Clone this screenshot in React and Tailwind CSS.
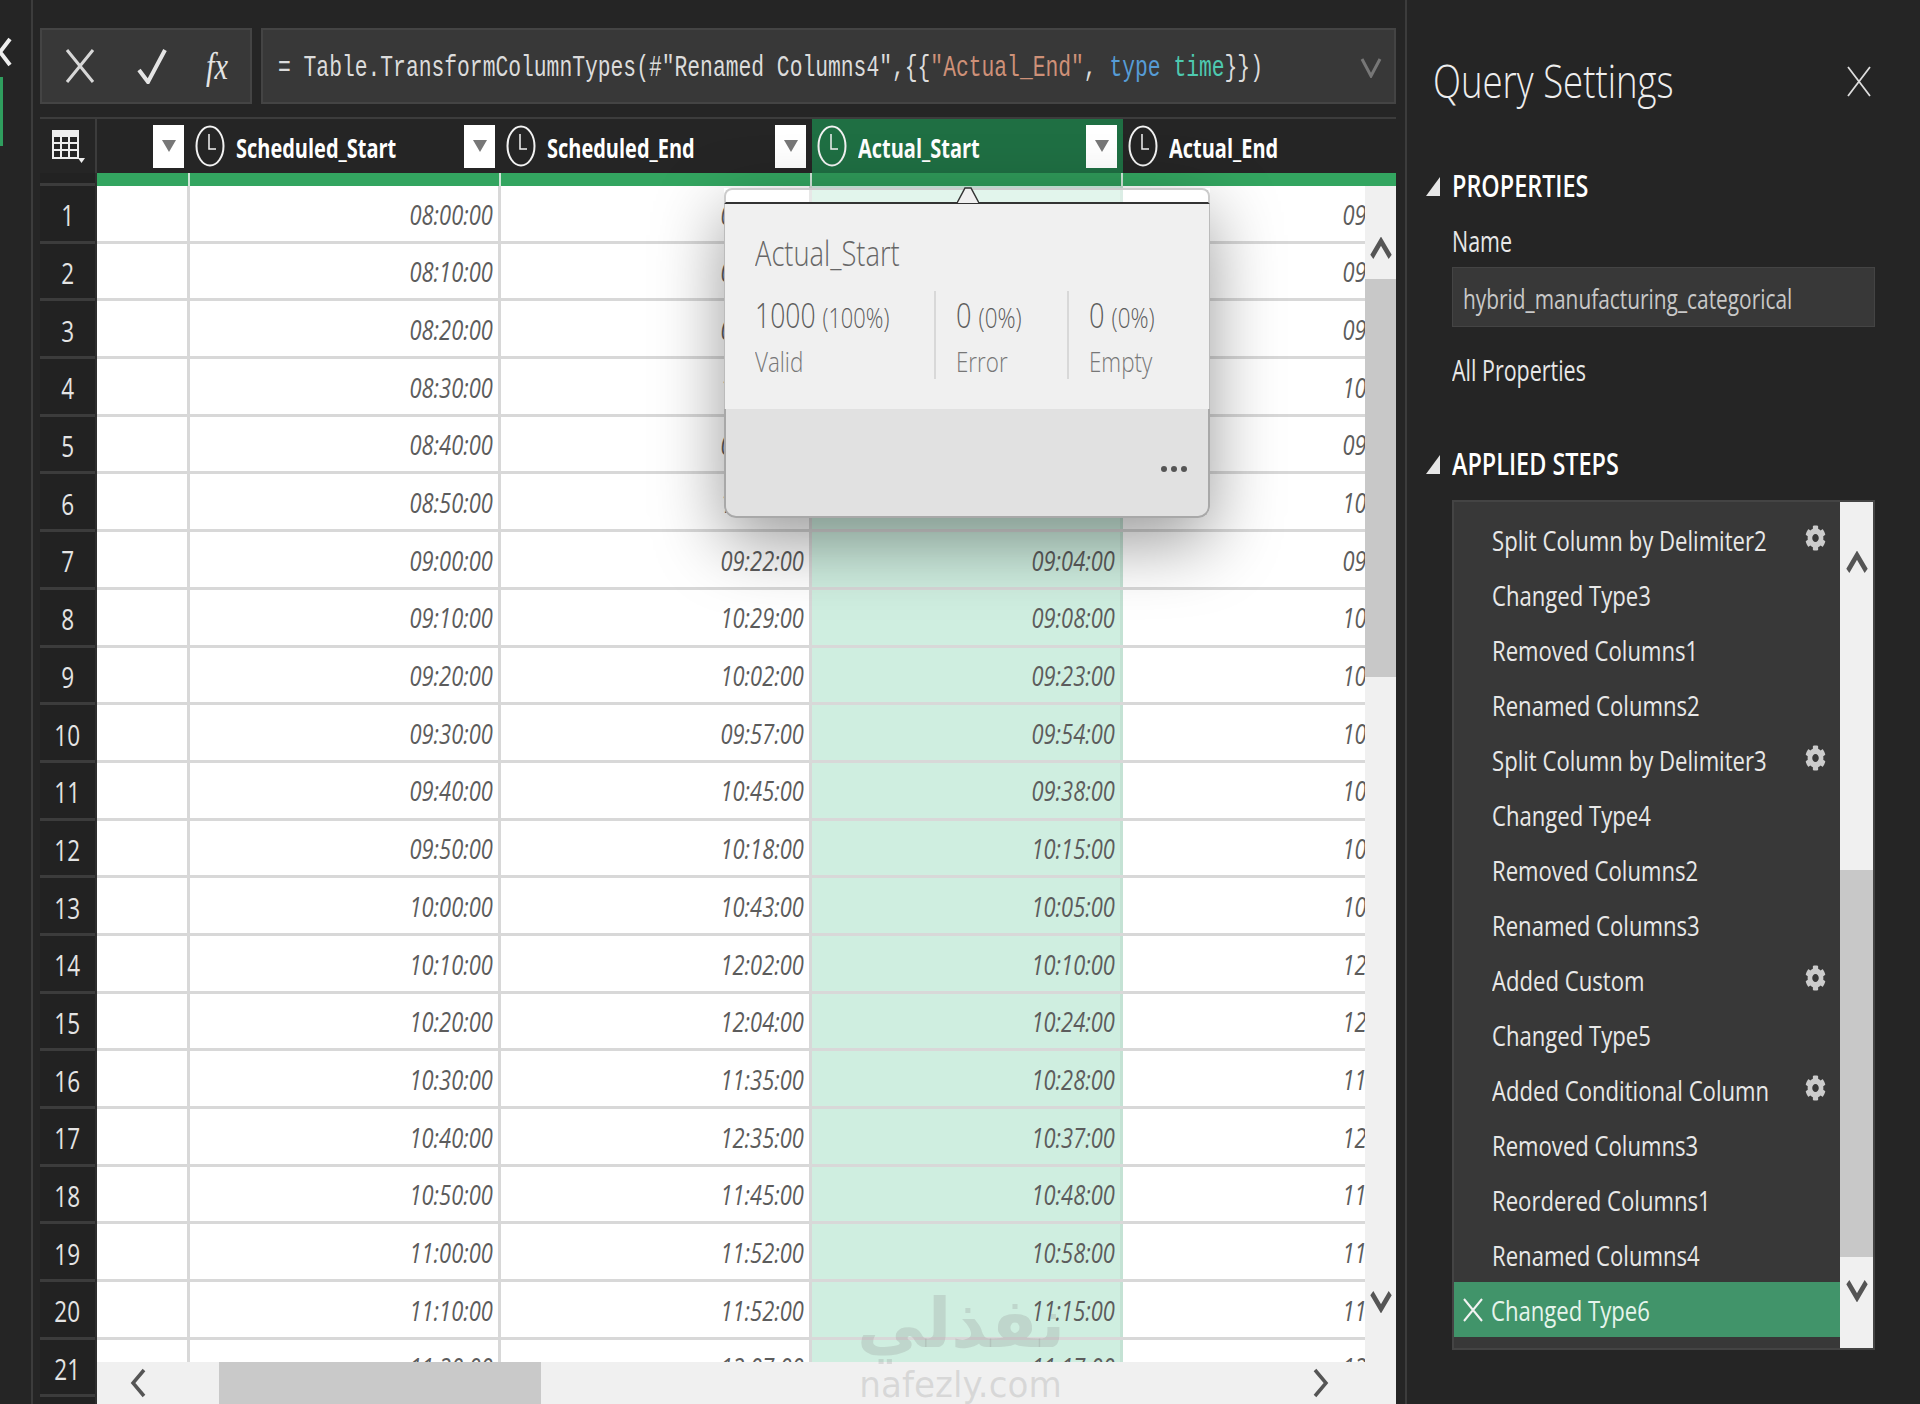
import React from "react";
import { FaCog } from "react-icons/fa";

const schedStart = ["08:00:00","08:10:00","08:20:00","08:30:00","08:40:00","08:50:00","09:00:00","09:10:00","09:20:00","09:30:00","09:40:00","09:50:00","10:00:00","10:10:00","10:20:00","10:30:00","10:40:00","10:50:00","11:00:00","11:10:00","11:20:00"];
const schedEnd = ["09:08:00","09:18:00","09:28:00","10:38:00","09:48:00","10:58:00","09:22:00","10:29:00","10:02:00","09:57:00","10:45:00","10:18:00","10:43:00","12:02:00","12:04:00","11:35:00","12:35:00","11:45:00","11:52:00","11:52:00","12:07:00"];
const actualStart = ["08:02:00","08:12:00","08:21:00","08:33:00","08:44:00","08:52:00","09:04:00","09:08:00","09:23:00","09:54:00","09:38:00","10:15:00","10:05:00","10:10:00","10:24:00","10:28:00","10:37:00","10:48:00","10:58:00","11:15:00","11:17:00"];
const actualEnd = ["09:10:00","09:20:00","09:30:00","10:40:00","09:50:00","10:05:00","09:40:00","10:35:00","10:12:00","10:03:00","10:55:00","10:28:00","10:50:00","12:10:00","12:14:00","11:42:00","12:40:00","11:50:00","11:59:00","11:58:00","12:10:00"];

const steps = [
  ["Split Column by Delimiter2", true],
  ["Changed Type3", false],
  ["Removed Columns1", false],
  ["Renamed Columns2", false],
  ["Split Column by Delimiter3", true],
  ["Changed Type4", false],
  ["Removed Columns2", false],
  ["Renamed Columns3", false],
  ["Added Custom", true],
  ["Changed Type5", false],
  ["Added Conditional Column", true],
  ["Removed Columns3", false],
  ["Reordered Columns1", false],
  ["Renamed Columns4", false],
];

const ClockIcon = () => (
  <svg viewBox="0 0 30 42" preserveAspectRatio="none" className="w-[30px] h-[42px] shrink-0" fill="none" stroke="#f2f2f2" strokeWidth="2">
    <ellipse cx="15" cy="21" rx="13.5" ry="19.5" />
    <path d="M14 9v15h7" strokeWidth="1.5" />
  </svg>
);

const FilterButton = () => (
  <div className="w-[31px] h-[43px] bg-white flex items-center justify-center shrink-0">
    <svg viewBox="0 0 14 12" className="w-[14px] h-[12px]"><path d="M0 0h14L7 12z" fill="#777" /></svg>
  </div>
);

const HeaderCell = ({ title, active, width, noButton }) => (
  <div className={`flex items-center h-full shrink-0 pl-[5px] pr-[6px] ${width} ${active ? "bg-[#1f6f43]" : ""}`}>
    <ClockIcon />
    <span className="ml-[11px] pt-[4px] inline-block origin-left scale-x-[0.74] text-[27px] font-bold text-white whitespace-nowrap flex-1">{title}</span>
    {!noButton && <FilterButton />}
  </div>
);

const Cell = ({ value, width, tint }) => (
  <div className={`${width} shrink-0 h-full flex items-center justify-end pr-[5px] pt-[3px] border-r-[3px] ${tint ? "bg-[#cfeee0] border-[#c4e2d4]" : "border-[#d8d8d8]"}`}>
    <span className="inline-block origin-right scale-x-[0.81] italic text-[27px] text-[#5c5c5c] whitespace-nowrap">{value}</span>
  </div>
);

const Arrow = ({ dir, className }) => {
  const d = {
    up: "M2 14 L12 3 L22 14",
    down: "M2 3 L12 14 L22 3",
  }[dir];
  return (
    <svg viewBox="0 0 24 17" className={`w-[22px] h-[24px] ${className}`} preserveAspectRatio="none" fill="none" stroke="#555" strokeWidth="4.5">
      <path d={d} />
    </svg>
  );
};

const SideArrow = ({ right }) => (
  <svg viewBox="0 0 18 30" preserveAspectRatio="none" className="w-[18px] h-[30px]" fill="none" stroke="#555" strokeWidth="3.5">
    <path d={right ? "M3 2 L14 15 L3 28" : "M15 2 L4 15 L15 28"} />
  </svg>
);

const Triangle = () => (
  <svg viewBox="0 0 14 19" preserveAspectRatio="none" className="w-[14px] h-[19px] shrink-0"><path d="M14 0v19H0z" fill="#e6e6e6" /></svg>
);

const Popup = () => (
  <div className="absolute left-[724px] top-[188px] w-[486px] h-[330px] flex flex-col rounded-b-[12px] shadow-[0_24px_70px_rgba(0,0,0,0.4)] text-[#5c5c5c]">
    <div className="relative h-[16px] rounded-t-[8px] bg-white/40 border-x-2 border-t-2 border-b-2 border-x-[#ccc] border-t-[#ccc] border-b-[#333]">
      <svg viewBox="0 0 22 16" className="absolute left-[231px] top-[-4px] w-[22px] h-[18px]">
        <path d="M0 16 L8 1 L14 1 L22 16" fill="#f0f0f0" stroke="#333" strokeWidth="1.5" />
      </svg>
    </div>
    <div className="h-[205px] bg-[#f0f0f0] pl-[30px] pt-[27px] border-x border-[#bbb]">
      <div className="origin-left scale-x-[0.78] text-[35px] font-light leading-[44px] whitespace-nowrap text-[#666]">Actual_Start</div>
      <div className="flex mt-[16px] h-[88px]">
        <div className="w-[181px] border-r-2 border-[#d8d8d8] pt-[2px]">
          <div className="origin-left scale-x-[0.78] text-[34px] leading-[44px] font-light whitespace-nowrap">1000 <span className="text-[28px]">(100%)</span></div>
          <div className="mt-[2px] origin-left scale-x-[0.8] text-[28px] font-light leading-[40px] text-[#777]">Valid</div>
        </div>
        <div className="w-[133px] pl-[20px] border-r-2 border-[#d8d8d8] pt-[2px]">
          <div className="origin-left scale-x-[0.8] text-[34px] leading-[44px] font-light whitespace-nowrap">0 <span className="text-[28px]">(0%)</span></div>
          <div className="mt-[2px] origin-left scale-x-[0.8] text-[28px] font-light leading-[40px] text-[#777]">Error</div>
        </div>
        <div className="pl-[20px] pt-[2px]">
          <div className="origin-left scale-x-[0.8] text-[34px] leading-[44px] font-light whitespace-nowrap">0 <span className="text-[28px]">(0%)</span></div>
          <div className="mt-[2px] origin-left scale-x-[0.8] text-[28px] font-light leading-[40px] text-[#777]">Empty</div>
        </div>
      </div>
    </div>
    <div className="flex-1 bg-[#e1e1e1] rounded-b-[12px] border-2 border-t-0 border-[#a8a8a8] flex justify-end items-end pr-[21px] pb-[44px] gap-[4px]">
      <span className="w-[6px] h-[6px] rounded-full bg-[#555]" />
      <span className="w-[6px] h-[6px] rounded-full bg-[#555]" />
      <span className="w-[6px] h-[6px] rounded-full bg-[#555]" />
    </div>
  </div>
);

const App = () => {
  return (
    <div className="relative w-[1920px] h-[1404px] overflow-hidden bg-[#252525] flex font-['Open_Sans',sans-serif]">
      {/* left collapsed rail */}
      <div className="relative w-[33px] shrink-0 border-r-2 border-[#3c3c3c] flex flex-col">
        <svg viewBox="0 0 14 30" className="mt-[37px] ml-[-2px] w-[14px] h-[30px]" fill="none" stroke="#eee" strokeWidth="4"><path d="M12 2 L2 15 L12 28" /></svg>
        <div className="mt-[10px] w-[3px] h-[69px] bg-[#2f9e5e]" />
      </div>

      {/* formula bar + grid */}
      <div className="w-[1363px] shrink-0 pl-[7px] pt-[28px] flex flex-col">
        <div className="flex gap-[9px] h-[76px]">
          <div className="w-[212px] shrink-0 bg-[#383838] border-2 border-[#444] flex items-center">
            <svg viewBox="0 0 30 36" className="ml-[23px] w-[30px] h-[36px]" fill="none" stroke="#d8d8d8" strokeWidth="3"><path d="M2 2 L28 34 M28 2 L2 34" /></svg>
            <svg viewBox="0 0 30 36" className="ml-[42px] w-[30px] h-[36px]" fill="none" stroke="#e4e4e4" strokeWidth="4"><path d="M2 22 L11 34 L28 2" /></svg>
            <span className="ml-[39px] font-['Liberation_Serif',serif] italic text-[38px] text-[#e4e4e4] inline-block origin-left scale-x-[0.8]">fx</span>
          </div>
          <div className="flex-1 min-w-0 overflow-hidden bg-[#383838] border-2 border-[#444] flex items-center pl-[15px] pt-[5px] relative">
            <span className="inline-block origin-left scale-x-[0.735] font-['Liberation_Mono',monospace] text-[29px] text-[#dcdcdc] whitespace-pre">
              {'= Table.TransformColumnTypes(#"Renamed Columns4",{{'}
              <span className="text-[#ce9178]">"Actual_End"</span>
              {", "}
              <span className="text-[#569cd6]">type</span>{" "}
              <span className="text-[#4ec9b0]">time</span>
              {"}})"}
            </span>
            <svg viewBox="0 0 22 22" className="absolute right-[12px] top-[26px] w-[22px] h-[22px]" fill="none" stroke="#777" strokeWidth="3"><path d="M2 3 L11 20 L20 3" /></svg>
          </div>
        </div>

        <div className="mt-[13px] flex-1 min-h-0 flex flex-col overflow-hidden">
          {/* column headers */}
          <div className="h-[56px] flex items-center border-t-2 border-[#3c3c3c] shrink-0 overflow-hidden">
            <div className="w-[57px] h-full shrink-0 border-r-2 border-[#3c3c3c] flex items-center pl-[11px]">
              <svg viewBox="0 0 34 34" className="w-[34px] h-[34px]" fill="#eee">
                <path d="M1 1h27v29H1z M3 8v5h6V8z M11 8v5h6V8z M19 8v5h7V8z M3 15v5h6v-5z M11 15v5h6v-5z M19 15v5h7v-5z M3 22v6h6v-6z M11 22v6h6v-6z M19 22v6h7v-6z" fillRule="evenodd" />
                <path d="M27 29h7l-3.500 5z" />
              </svg>
            </div>
            <div className="w-[93px] h-full shrink-0 flex items-center justify-end pr-[6px]"><FilterButton /></div>
            <HeaderCell title="Scheduled_Start" width="w-[311px]" />
            <HeaderCell title="Scheduled_End" width="w-[311px]" />
            <HeaderCell title="Actual_Start" width="w-[311px]" active />
            <HeaderCell title="Actual_End" width="w-[273px]" noButton />
          </div>

          {/* body */}
          <div className="flex-1 min-h-0 flex">
            <div className="w-[57px] shrink-0 flex flex-col overflow-hidden border-r-2 border-[#2e2e2e] bg-[#222]">
              <div className="h-[13px] shrink-0 border-b-[3px] border-[#3c3c3c]" />
              {schedStart.map((_, i) => (
                <div key={i} className="h-[57.7px] shrink-0 border-b-[3px] border-[#3c3c3c] flex items-center justify-center pt-[3px]">
                  <span className="inline-block scale-x-[0.75] text-[30px] text-[#e4e4e4]">{i + 1}</span>
                </div>
              ))}
            </div>
            <div className="flex-1 min-w-0 flex flex-col">
              <div className="h-[13px] shrink-0 bg-[#33a560] flex">
                <div className="w-[93px] border-r-2 border-[#cfe6d8]" />
                <div className="w-[311px] border-r-2 border-[#cfe6d8]" />
                <div className="w-[311px] border-r-2 border-[#cfe6d8]" />
                <div className="w-[311px] border-r-2 border-[#cfe6d8] bg-[#2f9a59]" />
              </div>
              <div className="flex-1 min-h-0 flex">
                <div className="flex-1 min-w-0 bg-white overflow-hidden flex flex-col">
                  {schedStart.map((v, i) => (
                    <div key={i} className="h-[57.7px] shrink-0 flex w-[1337px] border-b-[3px] border-[#d8d8d8]">
                      <div className="w-[93px] shrink-0 border-r-[3px] border-[#d8d8d8]" />
                      <Cell value={v} width="w-[311px]" />
                      <Cell value={schedEnd[i]} width="w-[311px]" />
                      <Cell value={actualStart[i]} width="w-[311px]" tint />
                      <Cell value={actualEnd[i]} width="w-[311px]" />
                    </div>
                  ))}
                </div>
                <div className="w-[31px] shrink-0 bg-[#f0f0f0] flex flex-col items-center">
                  <Arrow dir="up" className="mt-[51px] shrink-0" />
                  <div className="mt-[18px] h-[398px] w-full bg-[#c8c8c8] shrink-0" />
                  <Arrow dir="down" className="mt-[612px] shrink-0" />
                </div>
              </div>
              <div className="h-[42px] shrink-0 bg-[#f0f0f0] flex items-center">
                <div className="ml-[32px]"><SideArrow /></div>
                <div className="ml-[72px] w-[322px] h-full bg-[#c9c9c9]" />
                <div className="ml-auto mr-[66px]"><SideArrow right /></div>
              </div>
            </div>
          </div>
        </div>
      </div>

      {/* right side panel */}
      <div className="ml-[9px] flex-1 border-l-2 border-[#3c3c3c] pl-[19px] flex flex-col">
        <div className="flex items-center h-[60px] mt-[50px] pl-[7px] relative">
          <span className="inline-block origin-left scale-x-[0.795] text-[46px] font-light text-[#eee] whitespace-nowrap leading-none">Query Settings</span>
          <svg viewBox="0 0 24 31" preserveAspectRatio="none" className="absolute left-[421px] top-[16px] w-[24px] h-[31px]" fill="none" stroke="#ddd" strokeWidth="1.8"><path d="M1 1 L23 30 M23 1 L1 30" /></svg>
        </div>
        <div className="mt-[60px] flex items-center gap-[12px]">
          <Triangle />
          <span className="inline-block origin-left scale-x-[0.78] text-[30px] font-semibold text-white whitespace-nowrap leading-[32px]">PROPERTIES</span>
        </div>
        <div className="pl-[26px]">
          <div className="mt-[23px] origin-left scale-x-[0.74] text-[29px] text-[#e8e8e8] leading-[32px]">Name</div>
          <div className="mt-[10px] w-[423px] h-[60px] bg-[#383838] border border-[#444] flex items-center pl-[10px] pt-[2px]">
            <span className="inline-block origin-left scale-x-[0.745] text-[28px] text-[#c8c8c8] whitespace-nowrap">hybrid_manufacturing_categorical</span>
          </div>
          <div className="mt-[27px] origin-left scale-x-[0.74] text-[29px] text-[#e8e8e8] leading-[32px] whitespace-nowrap">All Properties</div>
        </div>
        <div className="mt-[62px] flex items-center gap-[12px]">
          <Triangle />
          <span className="inline-block origin-left scale-x-[0.78] text-[30px] font-semibold text-white whitespace-nowrap leading-[32px]">APPLIED STEPS</span>
        </div>
        <div className="mt-[20px] ml-[26px] w-[423px] h-[850px] bg-[#383838] border-2 border-[#444] flex">
          <div className="flex-1 min-w-0 pt-[10px] flex flex-col">
            {steps.map(([name, gear]) => (
              <div key={name} className="h-[55px] shrink-0 flex items-center pl-[38px] relative">
                <span className="inline-block origin-left scale-x-[0.79] text-[28px] text-[#e8e8e8] whitespace-nowrap">{name}</span>
                {gear && <FaCog preserveAspectRatio="none" className="absolute left-[351px] top-[13px] w-[21px] h-[26px] text-[#ccc]" />}
              </div>
            ))}
            <div className="h-[55px] shrink-0 bg-[#41946a] flex items-center pl-[9px]">
              <svg viewBox="0 0 20 24" preserveAspectRatio="none" className="w-[20px] h-[24px] shrink-0" fill="none" stroke="#f2f2f2" strokeWidth="2"><path d="M1 1 L19 23 M19 1 L1 23" /></svg>
              <span className="ml-[8px] inline-block origin-left scale-x-[0.79] text-[28px] text-[#e6f4ec] whitespace-nowrap">Changed Type6</span>
            </div>
          </div>
          <div className="w-[33px] shrink-0 bg-[#f0f0f0] flex flex-col items-center">
            <Arrow dir="up" className="mt-[49px] shrink-0" />
            <div className="mt-[295px] h-[387px] w-full bg-[#c8c8c8] shrink-0" />
            <Arrow dir="down" className="mt-[21px] shrink-0" />
          </div>
        </div>
      </div>

      <Popup />

      {/* watermark */}
      <div className="absolute left-[841px] top-[1280px] w-[240px] flex flex-col items-center pointer-events-none">
        <span className="font-['DejaVu_Sans',sans-serif] font-bold text-[68px] leading-[88px] text-[#8f8f8f]/25">نفذلي</span>
        <span className="font-['DejaVu_Sans',sans-serif] text-[36px] leading-[40px] -mt-[3px] text-[#8f8f8f]/25 inline-block scale-x-[0.95]">nafezly.com</span>
      </div>
    </div>
  );
};

export default App;
